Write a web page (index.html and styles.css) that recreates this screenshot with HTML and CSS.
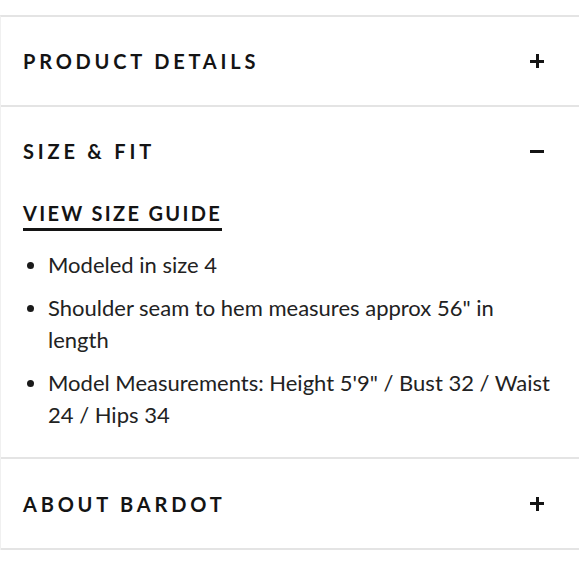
FILE: index.html
```html
<!DOCTYPE html>
<html>
<head>
<meta charset="utf-8">
<link rel="stylesheet" href="styles.css">
</head>
<body>
<div class="accordion">
  <section class="item">
    <div class="head">
      <h2 class="title">PRODUCT DETAILS</h2>
      <span class="icon plus"></span>
    </div>
  </section>
  <section class="item open">
    <div class="head">
      <h2 class="title">SIZE &amp; FIT</h2>
      <span class="icon minus"></span>
    </div>
    <div class="body">
      <a class="guide">VIEW SIZE GUIDE</a>
      <ul class="list">
        <li>Modeled in size 4</li>
        <li>Shoulder seam to hem measures approx 56" in length</li>
        <li>Model Measurements: Height 5'9" / Bust 32 / Waist 24 / Hips 34</li>
      </ul>
    </div>
  </section>
  <section class="item">
    <div class="head">
      <h2 class="title">ABOUT BARDOT</h2>
      <span class="icon plus"></span>
    </div>
  </section>
</div>
</body>
</html>
```
FILE: styles.css
```css
html, body {
  margin: 0;
  padding: 0;
  background: #fff;
}
body {
  font-family: "Lato", "Liberation Sans", sans-serif;
  color: #1a1a1a;
}
.accordion {
  margin-top: 15px;
  width: 578px;
  border-top: 2px solid #e4e4e4;
  border-left: 1px solid #f0f0f0;
}
.item {
  border-bottom: 2px solid #e4e4e4;
}
.head {
  height: 88px;
  display: flex;
  align-items: center;
  justify-content: space-between;
  padding: 0 35px 0 22px;
}
.item:last-child .head {
  height: 89px;
}
.title {
  margin: 0;
  font-size: 20px;
  font-weight: 700;
  letter-spacing: 3.8px;
  color: #141414;
}
.icon {
  position: relative;
  width: 14px;
  height: 14px;
}
.icon::before, .icon::after {
  content: "";
  position: absolute;
  background: #141414;
}
.icon::before {
  left: 0;
  top: 5.5px;
  width: 14px;
  height: 3px;
}
.plus::after {
  left: 5.5px;
  top: 0;
  width: 3px;
  height: 14px;
}
.body {
  padding: 6px 25px 26px 22px;
}
.guide {
  display: inline-block;
  font-size: 20px;
  font-weight: 700;
  letter-spacing: 2.3px;
  color: #141414;
  padding-bottom: 3px;
  border-bottom: 3.5px solid #141414;
  line-height: 24px;
}
.list {
  list-style: none;
  margin: 18px 0 0 0;
  padding: 0 0 0 25px;
  font-size: 22px;
  line-height: 32px;
  color: #222;
}
.list li {
  position: relative;
  margin-bottom: 11px;
}
.list li::before {
  content: "";
  position: absolute;
  left: -21.5px;
  top: 12.5px;
  width: 7px;
  height: 7px;
  border-radius: 50%;
  background: #1a1a1a;
}
.list li:last-child {
  margin-bottom: 0;
}
```
